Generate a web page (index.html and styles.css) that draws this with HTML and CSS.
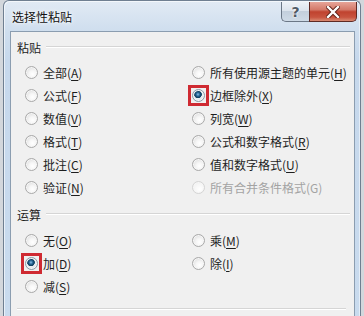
FILE: index.html
```html
<!DOCTYPE html>
<html lang="zh-CN">
<head>
<meta charset="utf-8">
<title>选择性粘贴</title>
<link rel="stylesheet" href="styles.css">
</head>
<body>
<div class="window">
  <div class="titlebar">
    <span class="title">选择性粘贴</span>
    <div class="caption-btns">
      <span class="cbtn help">?</span>
      <span class="cbtn close">
        <svg width="14" height="12" viewBox="0 0 14 12"><path d="M2 1 L12 11 M12 1 L2 11" stroke="#5a1d14" stroke-width="4.2" stroke-linecap="square" fill="none"/><path d="M2 1 L12 11 M12 1 L2 11" stroke="#fff" stroke-width="2.4" stroke-linecap="square" fill="none"/></svg>
      </span>
    </div>
  </div>
  <div class="client">
    <div class="group-head"><span class="group-label">粘贴</span><span class="group-line"></span></div>
    <div class="options paste">
      <label class="opt"><span class="radio"></span>全部(<u>A</u>)</label>
      <label class="opt"><span class="radio"></span>所有使用源主题的单元(<u>H</u>)</label>
      <label class="opt"><span class="radio"></span>公式(<u>F</u>)</label>
      <label class="opt"><span class="mark"><span class="radio checked"></span></span>边框除外(<u>X</u>)</label>
      <label class="opt"><span class="radio"></span>数值(<u>V</u>)</label>
      <label class="opt"><span class="radio"></span>列宽(<u>W</u>)</label>
      <label class="opt"><span class="radio"></span>格式(<u>T</u>)</label>
      <label class="opt"><span class="radio"></span>公式和数字格式(<u>R</u>)</label>
      <label class="opt"><span class="radio"></span>批注(<u>C</u>)</label>
      <label class="opt"><span class="radio"></span>值和数字格式(<u>U</u>)</label>
      <label class="opt"><span class="radio"></span>验证(<u>N</u>)</label>
      <label class="opt disabled"><span class="radio"></span>所有合并条件格式(G)</label>
    </div>
    <div class="group-head ops-head"><span class="group-label">运算</span><span class="group-line"></span></div>
    <div class="options ops">
      <label class="opt"><span class="radio"></span>无(<u>O</u>)</label>
      <label class="opt"><span class="radio"></span>乘(<u>M</u>)</label>
      <label class="opt"><span class="mark"><span class="radio checked"></span></span>加(<u>D</u>)</label>
      <label class="opt"><span class="radio"></span>除(<u>I</u>)</label>
      <label class="opt"><span class="radio"></span>减(<u>S</u>)</label>
    </div>
    <div class="bottom-line"></div>
  </div>
</div>
</body>
</html>
```

FILE: styles.css
```css
* { box-sizing: border-box; }
html, body { margin: 0; padding: 0; }
body {
  width: 364px;
  height: 316px;
  overflow: hidden;
  background: #d3d7dc;
  font-family: "Noto Sans CJK SC", "Noto Sans", sans-serif;
  font-size: 12px;
  color: #1e1e1e;
}
.window {
  margin-left: 3px;
  width: 358px;
  height: 330px;
  border: 1px solid #6f7f91;
  border-bottom: none;
  border-radius: 6px 6px 0 0;
  padding: 0 5px 0 6px;
  background: linear-gradient(180deg, #e1eaf4 0px, #cfdeee 30px, #c6d8ec 60px, #c9dbee 100%);
  box-shadow: inset 1px 1px 0 rgba(255,255,255,0.6), inset -1px 0 0 rgba(255,255,255,0.5);
}
.titlebar {
  height: 30px;
  display: flex;
  justify-content: space-between;
  align-items: flex-start;
}
.title {
  margin-top: 8px;
  padding-left: 2px;
  font-size: 12px;
  line-height: 16px;
  color: #111;
  text-shadow: 0 0 6px #fff, 0 0 3px #fff;
}
.caption-btns {
  display: flex;
  margin-right: -2px;
  margin-top: 1px;
}
.cbtn {
  height: 20px;
  display: flex;
  align-items: center;
  justify-content: center;
  border: 1px solid #6b7786;
  border-top: none;
}
.help {
  width: 28px;
  border-radius: 0 0 0 5px;
  border-right: none;
  background: linear-gradient(180deg, #edf2f7 0%, #dce4ed 45%, #c3cfdc 50%, #cfdbe7 100%);
  font-family: "DejaVu Sans", sans-serif;
  font-weight: bold;
  font-size: 14px;
  color: #4f5a66;
  text-shadow: 0 0 2px #fff, 0 0 2px #fff;
}
.close {
  width: 48px;
  border-color: #5e2a24;
  border-radius: 0 0 5px 0;
  background: linear-gradient(180deg, #e6a498 0%, #d47a6a 40%, #c0432f 52%, #c8543f 80%, #d98a72 100%);
}
.client {
  height: 300px;
  background: #f0f0f0;
  border: 1px solid #8b9db0;
  border-bottom: none;
  padding: 8px 4px 0 6px;
}
.group-head {
  display: flex;
  align-items: center;
  height: 16px;
}
.group-label {
  line-height: 16px;
  color: #1e1e1e;
}
.group-line {
  flex: 1;
  margin-left: 5px;
  margin-top: -3px;
  border-top: 1px solid #d5d5d5;
  border-bottom: 1px solid #ffffff;
}
.options {
  display: grid;
  grid-template-columns: 167px 1fr;
  grid-auto-rows: 23px;
  padding-left: 8px;
  margin-top: 5px;
}
.ops-head { margin-top: 8px; }
.ops { margin-top: 6px; }
.opt {
  display: flex;
  align-items: center;
  line-height: 23px;
  white-space: nowrap;
  color: #1e1e1e;
}
.opt u { text-underline-offset: 2px; }
.disabled { color: #a3a3a3; }
.radio {
  flex: none;
  width: 13px;
  height: 13px;
  margin-right: 5px;
  border-radius: 50%;
  border: 1px solid #a9a9a9;
  background: radial-gradient(circle at 60% 65%, #ffffff 0%, #f6f6f6 35%, #e0e0e0 75%, #cdcdcd 100%);
  box-shadow: inset 0 0 0 1px #f6f6f6;
}
.disabled .radio {
  border-color: #d4d4d4;
  background: radial-gradient(circle at 60% 65%, #ffffff 0%, #f6f6f6 50%, #ebebeb 100%);
}
.radio.checked {
  border-color: #8a98a6;
  background: radial-gradient(circle at 45% 40%, #8fc0e6 0%, #2e6f9e 18%, #0f3f63 34%, #1f4d6c 40%, #e9eef2 46%, #d7dce0 80%, #c4c8cc 100%);
}
.mark {
  flex: none;
  display: flex;
  width: 13px;
  height: 13px;
  margin-right: 5px;
  outline: 3px solid #cf2a32;
  outline-offset: 1px;
}
.mark .radio { margin-right: 0; }
.bottom-line {
  margin: 10px 4px 0 0;
  border-top: 1px solid #d5d5d5;
  border-bottom: 1px solid #fff;
}
```
